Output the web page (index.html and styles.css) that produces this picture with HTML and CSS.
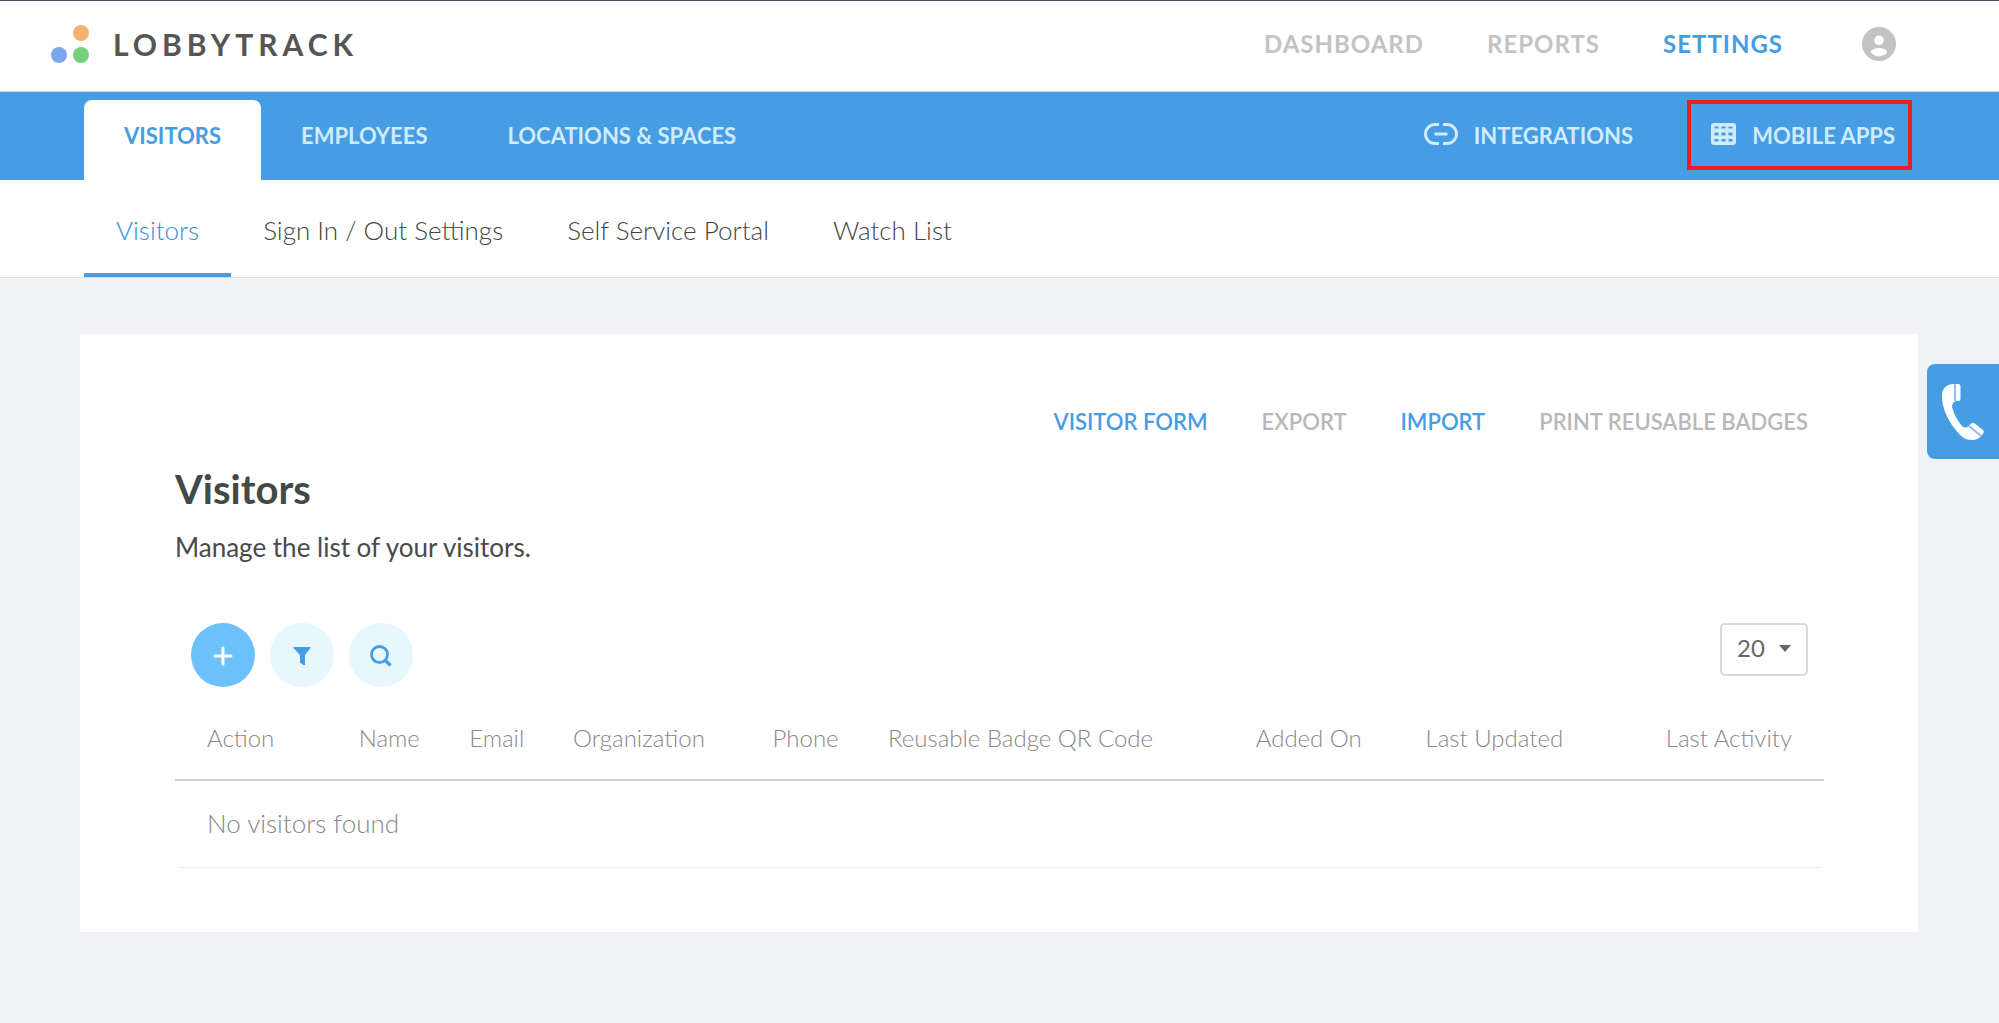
FILE: index.html
```html
<!DOCTYPE html>
<html lang="en">
<head>
<meta charset="utf-8">
<title>Lobbytrack - Visitors</title>
<link rel="stylesheet" href="styles.css">
</head>
<body>
<header class="topbar">
  <a class="brand" href="#">
    <svg class="brand-mark" viewBox="0 0 38 38" aria-hidden="true">
      <circle cx="30" cy="8" r="8" fill="#f4b470"/>
      <circle cx="8" cy="30" r="8" fill="#7ba5ec"/>
      <circle cx="30" cy="30" r="8" fill="#77d07d"/>
    </svg>
    <span class="brand-name">LOBBYTRACK</span>
  </a>
  <nav class="main-nav">
    <a href="#">DASHBOARD</a>
    <a href="#">REPORTS</a>
    <a href="#" class="active">SETTINGS</a>
    <a href="#" class="account" aria-label="Account">
      <svg viewBox="0 0 34 34"><path fill="#c3c3c3" fill-rule="evenodd" d="M17 0a17 17 0 1 0 0 34a17 17 0 0 0 0-34zM17 8.500a4.800 4.800 0 1 1 0 9.600a4.800 4.800 0 0 1 0-9.600zM17 21c5 0 8.200 2.200 8.200 4.600c-1.500 2.200-4.700 3.800-8.200 3.800s-6.700-1.600-8.200-3.800c0-2.400 3.200-4.600 8.200-4.600z"/></svg>
    </a>
  </nav>
</header>

<nav class="section-bar">
  <div class="tabs">
    <a href="#" class="tab tab-active">VISITORS</a>
    <a href="#" class="tab">EMPLOYEES</a>
    <a href="#" class="tab">LOCATIONS &amp; SPACES</a>
  </div>
  <div class="section-links">
    <a href="#" class="section-link">
      <svg class="icon-link" viewBox="0 0 34 22" fill="none" stroke="#d0ebfd" stroke-width="3"><path d="M15 1.500h-4a9.500 9.500 0 0 0 0 19H15M19 1.500h4a9.500 9.500 0 0 1 0 19H19M10.500 11h13"/></svg>
      <span>INTEGRATIONS</span>
    </a>
    <a href="#" class="section-link highlighted">
      <svg class="icon-grid" viewBox="0 0 25 22"><path fill="#d0ebfd" fill-rule="evenodd" d="M3 0h19a3 3 0 0 1 3 3v16a3 3 0 0 1-3 3H3a3 3 0 0 1-3-3V3a3 3 0 0 1 3-3zM3.500 3.500v2h4v-2zM10.500 3.500v2h4v-2zM17.500 3.500v2h4v-2zM3.500 9.500v3h4v-3zM10.500 9.500v3h4v-3zM17.500 9.500v3h4v-3zM3.500 16v2.500h4V16zM10.500 16v2.500h4V16zM17.500 16v2.500h4V16z"/></svg>
      <span>MOBILE APPS</span>
    </a>
  </div>
</nav>

<nav class="subnav">
  <a href="#" class="current">Visitors</a>
  <a href="#">Sign In / Out Settings</a>
  <a href="#">Self Service Portal</a>
  <a href="#">Watch List</a>
</nav>

<main class="card">
  <div class="actions">
    <a href="#" class="on">VISITOR FORM</a>
    <a href="#">EXPORT</a>
    <a href="#" class="on">IMPORT</a>
    <a href="#">PRINT REUSABLE BADGES</a>
  </div>
  <h1>Visitors</h1>
  <p class="lead">Manage the list of your visitors.</p>
  <div class="toolbar">
    <div class="tools">
      <button type="button" class="round primary" aria-label="Add visitor">
        <svg viewBox="0 0 20 20" fill="none" stroke="#fff" stroke-width="3" stroke-linecap="round"><path d="M10 2v16M2 10h16"/></svg>
      </button>
      <button type="button" class="round" aria-label="Filter">
        <svg viewBox="0 0 20 20" fill="#479de3"><path d="M2 1h16q1 0 .5 1L13 9v10h-1.500L8 16.500V9L1.500 2Q1 1 2 1z"/></svg>
      </button>
      <button type="button" class="round" aria-label="Search">
        <svg class="search" viewBox="0 0 22 22" fill="none" stroke="#479de3"><circle cx="9.500" cy="9.500" r="8" stroke-width="2.800"/><path d="M15 15l5.500 5.500" stroke-width="3.400"/></svg>
      </button>
    </div>
    <div class="page-size">
      <select aria-label="Rows per page"><option>20</option><option>50</option><option>100</option></select>
      <svg viewBox="0 0 12 7" aria-hidden="true"><path d="M0 0h12L6 7z" fill="#666"/></svg>
    </div>
  </div>
  <table class="visitors">
    <colgroup>
      <col class="w-action"><col class="w-name"><col class="w-email"><col class="w-org"><col class="w-phone"><col class="w-badge"><col class="w-added"><col class="w-updated"><col>
    </colgroup>
    <thead>
      <tr>
        <th>Action</th><th>Name</th><th>Email</th><th>Organization</th><th>Phone</th><th>Reusable Badge QR Code</th><th>Added On</th><th>Last Updated</th><th class="last">Last Activity</th>
      </tr>
    </thead>
    <tbody>
      <tr><td colspan="9"><div class="empty">No visitors found</div></td></tr>
    </tbody>
  </table>
</main>

<button type="button" class="call" aria-label="Call us">
  <svg viewBox="0 0 42 56">
    <path fill="#fff" d="M11 0C3 1 0 5 0 12c0 11 5 23 13 33c6 8 10 11 17 11c4 0 8-2 10-5L27 42c-3 2-5 2-7 0c-5-6-8-12-10-19c0-3 1-5 4-6h3V0z"/>
    <path fill="#fff" d="M10 0h6q2.500 0 2.500 2v13q0 2-2.500 2h-6zM26 43q4-5 6-4l9 7q2 2-1 5z"/>
    <path fill="none" stroke="#86c1f1" stroke-width="2" d="M13 0v17M27 42l12 10"/>
  </svg>
</button>
</body>
</html>
```
FILE: styles.css
```css
* { box-sizing: border-box; }

body {
  margin: 0;
  background: #f1f2f6;
  color: #4a4a4a;
  font-family: Lato, "Open Sans", sans-serif;
  font-size: 26px;
  line-height: 32px;
}

a { color: inherit; text-decoration: none; }
svg { display: block; flex: none; }

/* Top bar */
.topbar {
  display: flex;
  justify-content: space-between;
  align-items: center;
  height: 92px;
  padding: 0 103px 4px 51px;
  background: #fff;
  border-top: 1px solid #4a4a5a;
  border-bottom: 1px solid #d5d8db;
}
.brand { display: flex; align-items: center; gap: 24px; color: #555; }
.brand-mark { width: 38px; height: 38px; }
.brand-name { font-size: 30px; font-weight: 700; letter-spacing: 5px; }
.main-nav {
  display: flex;
  align-items: center;
  gap: 63px;
  color: #c3c3c3;
  font-size: 24px;
  font-weight: 700;
  letter-spacing: 1px;
}
.main-nav .active { color: #479de3; }
.account { margin-left: 16px; }
.account svg { width: 34px; height: 34px; }

/* Blue section bar */
.section-bar {
  display: flex;
  justify-content: space-between;
  height: 88px;
  padding: 8px 87px 0 84px;
  background: #479de3;
  color: #d0ebfd;
  font-size: 22px;
  font-weight: 700;
}
.tabs, .section-links { display: flex; }
.tab { padding: 20px 40px 0; border-radius: 8px 8px 0 0; }
.tab-active { background: #fff; color: #479de3; }
.section-links { gap: 54px; align-items: flex-start; }
.section-link { display: flex; align-items: center; height: 70px; gap: 16px; }
.section-link span { padding-top: 2px; }
.section-link svg { margin-bottom: 2px; }
.icon-link { width: 34px; height: 22px; }
.icon-grid { width: 25px; height: 22px; }
.highlighted { padding: 0 13px 0 20px; border: 4px solid #ee1c25; }

/* Sub navigation */
.subnav {
  display: flex;
  height: 98px;
  padding: 0 84px;
  background: #fff;
  border-bottom: 1px solid #dcdee0;
  color: #444;
  font-weight: 300;
}
.subnav a { padding: 34px 32px 0; }
.subnav .current { color: #2f8fdf; border-bottom: 4px solid #479de3; }

/* Content card */
.card {
  margin: 56px 81px 80px 80px;
  padding: 72px 94px 64px 95px;
  background: #fff;
}
.actions {
  display: flex;
  justify-content: flex-end;
  gap: 54px;
  padding-right: 16px;
  color: #b8b8b8;
  font-size: 22px;
  font-weight: 600;
}
.actions .on { color: #479de3; }
h1 {
  margin: 27px 0 0;
  color: #424a48;
  font-size: 40px;
  line-height: 48px;
  font-weight: 700;
}
.lead { margin: 18px 0 0; }
.toolbar {
  display: flex;
  justify-content: space-between;
  align-items: flex-start;
  margin-top: 60px;
  padding: 0 16px;
}
.tools { display: flex; gap: 15px; }
.round {
  display: flex;
  align-items: center;
  justify-content: center;
  width: 64px;
  height: 64px;
  padding: 2px 0 0;
  border: 0;
  border-radius: 50%;
  background: #e8f6fe;
}
.round.primary { background: #6dc1fa; }
.round svg { width: 20px; height: 20px; }
.round .search { width: 22px; height: 22px; }
.page-size { display: grid; align-items: center; }
.page-size select {
  grid-area: 1 / 1;
  width: 88px;
  height: 53px;
  padding: 0 0 3px 15px;
  appearance: none;
  border: 2px solid #d8d8d8;
  border-radius: 5px;
  background: #fff;
  color: #666;
  font: inherit;
  font-size: 24px;
}
.page-size svg {
  grid-area: 1 / 1;
  justify-self: end;
  width: 12px;
  height: 7px;
  margin: 0 17px 2px 0;
  pointer-events: none;
}

/* Visitors table */
.visitors {
  width: 100%;
  border-collapse: collapse;
  table-layout: fixed;
  color: #888;
  font-weight: 300;
}
.visitors th {
  height: 93px;
  padding: 10px 0 0 32px;
  border-bottom: 2px solid #d0d0d0;
  font-size: 24px;
  font-weight: 300;
  text-align: left;
  white-space: nowrap;
}
.visitors .last { padding: 10px 32px 0 0; text-align: right; }
.visitors td { padding: 0 3px; }
.empty { padding: 26px 29px 28px; border-bottom: 1px solid #efefef; }
.w-action { width: 9.2%; }
.w-name { width: 6.7%; }
.w-email { width: 6.3%; }
.w-org { width: 12.1%; }
.w-phone { width: 7%; }
.w-badge { width: 22.3%; }
.w-added { width: 10.3%; }
.w-updated { width: 12%; }

/* Floating call button on the window edge */
.call {
  position: fixed;
  top: 364px;
  right: 0;
  width: 72px;
  height: 95px;
  padding: 0 0 0 15px;
  border: 0;
  border-radius: 8px 0 0 8px;
  background: #479de3;
}
.call svg { width: 42px; height: 56px; }
```
